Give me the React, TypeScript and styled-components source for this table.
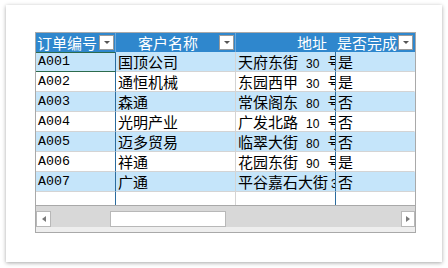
import React from "react";
import styled, { createGlobalStyle } from "styled-components";

const Global = createGlobalStyle`
  html, body { margin: 0; padding: 0; background: #ffffff; }
  body { width: 448px; height: 268px; overflow: hidden; }
`;

const Card = styled.div`
  box-sizing: border-box;
  margin: 5px 0 0 6px;
  width: 436px;
  height: 257px;
  background: #ffffff;
  box-shadow: 0 1px 4px rgba(0, 0, 0, 0.35);
  padding: 27px 0 0 29px;
`;

const Grid = styled.div`
  box-sizing: border-box;
  width: 381px;
  height: 201px;
  border: 1px solid #a9a9a9;
  display: flex;
  flex-direction: column;
  overflow: hidden;
`;

const cols = "80px 120px 100px 79px";

const HeaderRow = styled.div`
  display: grid;
  grid-template-columns: ${cols};
  height: 19px;
  background: #2f87cd;
  flex: none;
`;

const HeaderCell = styled.div<{ $align: string; $sep: boolean }>`
  box-sizing: border-box;
  display: flex;
  align-items: center;
  justify-content: ${(p) => p.$align};
  border-right: 1px solid ${(p) => (p.$sep ? "#6aa8dc" : "transparent")};
  padding: 0 ${(p) => (p.$align === "flex-end" ? "8px" : "1px")} 0 1px;
  color: #ffffff;
  font-family: "Noto Sans CJK SC", sans-serif;
  font-size: 15px;
  line-height: 19px;
  white-space: nowrap;
  overflow: hidden;
`;

const HeaderLabel = styled.span<{ $center?: boolean }>`
  flex: ${(p) => (p.$center ? "1" : "none")};
  text-align: ${(p) => (p.$center ? "center" : "left")};
`;

const FilterButton = styled.span`
  box-sizing: border-box;
  flex: none;
  width: 15px;
  height: 15px;
  margin-left: auto;
  background: #ffffff;
  border: 1px solid #9a9a9a;
  display: flex;
  align-items: center;
  justify-content: center;
  &::after {
    content: "";
    display: block;
    border-left: 3px solid transparent;
    border-right: 3px solid transparent;
    border-top: 3px solid #555555;
  }
`;

const Body = styled.div`
  height: 153px;
  overflow: hidden;
  flex: none;
`;

const Row = styled.div<{ $alt: boolean }>`
  display: grid;
  grid-template-columns: ${cols};
  height: 20px;
  background: ${(p) => (p.$alt ? "#c5e5fa" : "#ffffff")};
`;

const Cell = styled.div<{ $line: string; $mono?: boolean; $active?: boolean }>`
  box-sizing: border-box;
  height: 20px;
  border-right: 1px solid ${(p) => p.$line};
  border-bottom: 1px solid ${(p) => (p.$active ? "#2d6b4c" : "#d4d4d4")};
  padding-left: 2px;
  font-family: ${(p) =>
    p.$mono
      ? `"Liberation Mono", monospace`
      : `"Noto Sans CJK SC", sans-serif`};
  font-size: ${(p) => (p.$mono ? "13.3px" : "15px")};
  line-height: 19px;
  color: #000000;
  white-space: nowrap;
  overflow: hidden;
  box-shadow: ${(p) => (p.$active ? "inset 0 1px 0 #2d6b4c" : "none")};
`;

const Num = styled.span<{ $gap: number }>`
  font-family: "Liberation Sans", sans-serif;
  font-size: 12px;
  margin: 0 8px 0 ${(p) => p.$gap}px;
`;

const Scrollbar = styled.div`
  box-sizing: border-box;
  flex: none;
  height: 22px;
  border-top: 1px solid #a9a9a9;
  background: #d8d8d8;
  padding-top: 5px;
  display: flex;
  align-items: stretch;
`;

const ScrollButton = styled.div<{ $dir: "left" | "right" }>`
  box-sizing: border-box;
  width: ${(p) => (p.$dir === "left" ? "15px" : "14px")};
  margin-left: ${(p) => (p.$dir === "left" ? "0" : "auto")};
  background: #ffffff;
  border: 1px solid #b8b8b8;
  display: flex;
  align-items: center;
  justify-content: center;
  &::after {
    content: "";
    display: block;
    border-top: 3px solid transparent;
    border-bottom: 3px solid transparent;
    ${(p) =>
      p.$dir === "left"
        ? "border-right: 4px solid #7a7a7a;"
        : "border-left: 4px solid #7a7a7a;"}
  }
`;

const Thumb = styled.div`
  box-sizing: border-box;
  width: 116px;
  margin-left: 59px;
  background: #ffffff;
  border: 1px solid #b8b8b8;
`;

const Strip = styled.div`
  flex: 1;
  background: #eeeeee;
`;

type Rec = [string, string, [string, string, number], string];

const rows: Rec[] = [
  ["A001", "国顶公司", ["天府东街", "30", 8], "是"],
  ["A002", "通恒机械", ["东园西甲", "30", 8], "是"],
  ["A003", "森通", ["常保阁东", "80", 8], "否"],
  ["A004", "光明产业", ["广发北路", "10", 8], "否"],
  ["A005", "迈多贸易", ["临翠大街", "80", 8], "否"],
  ["A006", "祥通", ["花园东街", "90", 8], "是"],
  ["A007", "广通", ["平谷嘉石大街", "38", 3], "否"],
];

const lines = ["#2b6c9e", "#d4d4d4", "#2b6c9e", "transparent"];

export default function App() {
  return (
    <>
      <Global />
      <Card>
        <Grid>
          <HeaderRow>
            <HeaderCell $align="flex-start" $sep>
              <HeaderLabel>订单编号</HeaderLabel>
              <FilterButton />
            </HeaderCell>
            <HeaderCell $align="flex-start" $sep>
              <HeaderLabel $center>客户名称</HeaderLabel>
              <FilterButton />
            </HeaderCell>
            <HeaderCell $align="flex-end" $sep={false}>
              <HeaderLabel>地址</HeaderLabel>
            </HeaderCell>
            <HeaderCell $align="flex-start" $sep={false}>
              <HeaderLabel>是否完成</HeaderLabel>
              <FilterButton />
            </HeaderCell>
          </HeaderRow>
          <Body>
            {rows.map((r, i) => (
              <Row key={i} $alt={i % 2 === 0}>
                <Cell $line={lines[0]} $mono $active={i === 0}>
                  {r[0]}
                </Cell>
                <Cell $line={lines[1]}>{r[1]}</Cell>
                <Cell $line={lines[2]}>
                  {r[2][0]}
                  <Num $gap={r[2][2]}>{r[2][1]}</Num>号
                </Cell>
                <Cell $line={lines[3]}>{r[3]}</Cell>
              </Row>
            ))}
            <Row $alt={false}>
              {lines.map((l, j) => (
                <Cell key={j} $line={l} />
              ))}
            </Row>
          </Body>
          <Scrollbar>
            <ScrollButton $dir="left" />
            <Thumb />
            <ScrollButton $dir="right" />
          </Scrollbar>
          <Strip />
        </Grid>
      </Card>
    </>
  );
}
